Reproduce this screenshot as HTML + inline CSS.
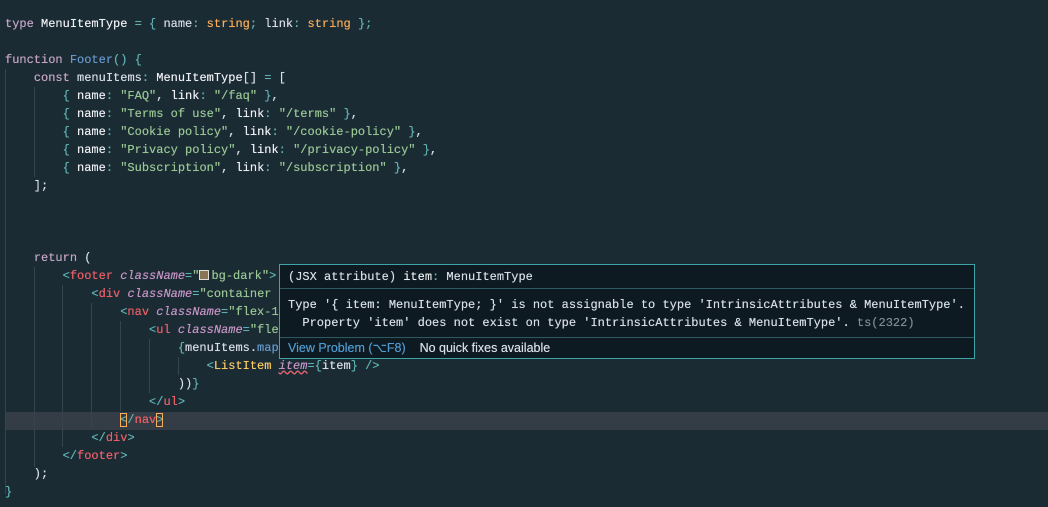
<!DOCTYPE html><html><head><style>
body{margin:0;width:1048px;height:507px;background:#1b2b34;overflow:hidden;position:relative;font-family:"Liberation Mono",monospace;font-size:12px;color:#d8dee9}
.l{position:absolute;left:5px;height:18px;line-height:18px;white-space:pre;text-shadow:0 0 0.4px currentColor}
.k{color:#c5a5c5}.s{color:#99c794}.p{color:#5fb3b3}.o{color:#f9ae58}.f{color:#6699cc}.t{color:#ec5f67}.a{color:#c594c5;font-style:italic}.y{color:#fac863}.w{color:#eef0f4}
.g{position:absolute;width:1px;background:#37444e}
.hl{position:absolute;left:5px;right:0;top:412px;height:18px;background:#343d46}
.tip{position:absolute;left:279px;top:264px;width:694px;height:93px;background:#0e1a21;border:1px solid #3da4a8;color:#d8dee9;text-shadow:0 0 0.4px currentColor}
.tip .r{position:absolute;left:8px;white-space:pre;line-height:18px}
.hr{position:absolute;left:0;right:0;height:1px;background:#2d5a60}
.sw{display:inline-block;width:8px;height:8px;background:#8b7355;border:1px solid #ddd;vertical-align:-1px;margin:0 2px 0 0}
.box{outline:1px solid #f9ae58;outline-offset:-1px}
</style></head><body>
<div class="hl"></div>
<div class="g" style="left:5px;top:69px;height:425px"></div>
<div class="g" style="left:34px;top:87px;height:90px"></div>
<div class="g" style="left:34px;top:267px;height:200px"></div>
<div class="g" style="left:62px;top:285px;height:162px"></div>
<div class="g" style="left:91px;top:303px;height:126px"></div>
<div class="g" style="left:120px;top:321px;height:90px"></div>
<div class="g" style="left:149px;top:339px;height:54px"></div>
<div class="g" style="left:178px;top:357px;height:18px"></div>
<div class="l" style="top:15px"><span class="k">type</span> <span class="w">MenuItemType</span> <span class="p">=</span> <span class="p">{</span> name<span class="p">:</span> <span class="o">string</span><span class="p">;</span> link<span class="p">:</span> <span class="o">string</span> <span class="p">};</span></div>
<div class="l" style="top:51px"><span class="k">function</span> <span class="f">Footer</span><span class="p">()</span> <span class="p">{</span></div>
<div class="l" style="top:69px">    <span class="k">const</span> menuItems<span class="p">:</span> <span class="w">MenuItemType</span>[] <span class="p">=</span> [</div>
<div class="l" style="top:87px">        <span class="p">{</span> <span class="w">name</span><span class="p">:</span> <span class="s">"FAQ"</span>, <span class="w">link</span><span class="p">:</span> <span class="s">"/faq"</span> <span class="p">}</span>,</div>
<div class="l" style="top:105px">        <span class="p">{</span> <span class="w">name</span><span class="p">:</span> <span class="s">"Terms of use"</span>, <span class="w">link</span><span class="p">:</span> <span class="s">"/terms"</span> <span class="p">}</span>,</div>
<div class="l" style="top:123px">        <span class="p">{</span> <span class="w">name</span><span class="p">:</span> <span class="s">"Cookie policy"</span>, <span class="w">link</span><span class="p">:</span> <span class="s">"/cookie-policy"</span> <span class="p">}</span>,</div>
<div class="l" style="top:141px">        <span class="p">{</span> <span class="w">name</span><span class="p">:</span> <span class="s">"Privacy policy"</span>, <span class="w">link</span><span class="p">:</span> <span class="s">"/privacy-policy"</span> <span class="p">}</span>,</div>
<div class="l" style="top:159px">        <span class="p">{</span> <span class="w">name</span><span class="p">:</span> <span class="s">"Subscription"</span>, <span class="w">link</span><span class="p">:</span> <span class="s">"/subscription"</span> <span class="p">}</span>,</div>
<div class="l" style="top:177px">    ];</div>
<div class="l" style="top:249px">    <span class="k">return</span> (</div>
<div class="l" style="top:267px">        <span class="p">&lt;</span><span class="t">footer</span> <span class="a">className</span><span class="p">=</span><span class="s">"<span class="sw"></span>bg-dark"</span><span class="p">&gt;</span></div>
<div class="l" style="top:285px">            <span class="p">&lt;</span><span class="t">div</span> <span class="a">className</span><span class="p">=</span><span class="s">"container</span></div>
<div class="l" style="top:303px">                <span class="p">&lt;</span><span class="t">nav</span> <span class="a">className</span><span class="p">=</span><span class="s">"flex-1</span></div>
<div class="l" style="top:321px">                    <span class="p">&lt;</span><span class="t">ul</span> <span class="a">className</span><span class="p">=</span><span class="s">"fle</span></div>
<div class="l" style="top:339px">                        <span class="p">{</span>menuItems.<span class="f">map</span></div>
<div class="l" style="top:357px">                            <span class="p">&lt;</span><span class="y">ListItem</span> <span class="a" style="text-decoration:underline wavy #ec5f67">item</span><span class="p">={</span>item<span class="p">}</span> <span class="p">/&gt;</span></div>
<div class="l" style="top:375px">                        ))<span class="p">}</span></div>
<div class="l" style="top:393px">                    <span class="p">&lt;/</span><span class="t">ul</span><span class="p">&gt;</span></div>
<div class="l" style="top:411px">                <span class="p box">&lt;</span><span class="p">/</span><span class="t">nav</span><span class="p box">&gt;</span></div>
<div class="l" style="top:429px">            <span class="p">&lt;/</span><span class="t">div</span><span class="p">&gt;</span></div>
<div class="l" style="top:447px">        <span class="p">&lt;/</span><span class="t">footer</span><span class="p">&gt;</span></div>
<div class="l" style="top:465px">    );</div>
<div class="l" style="top:483px"><span class="p">}</span></div>
<div class="tip">
<div class="r" style="top:3px">(JSX attribute) <span class="w">item</span><span class="p">:</span> MenuItemType</div>
<div class="hr" style="top:23px"></div>
<div class="r" style="top:31px">Type '{ item: MenuItemType; }' is not assignable to type 'IntrinsicAttributes &amp; MenuItemType'.</div>
<div class="r" style="top:49px">  Property 'item' does not exist on type 'IntrinsicAttributes &amp; MenuItemType'. <span style="color:#7f8c96">ts(2322)</span></div>
<div class="hr" style="top:72px"></div>
<div class="r" style="top:74px;font-family:'Liberation Sans',sans-serif;font-size:12.5px"><span style="color:#4f9bd0">View Problem (⌥F8)</span>    No quick fixes available</div>
</div>
</body></html>
